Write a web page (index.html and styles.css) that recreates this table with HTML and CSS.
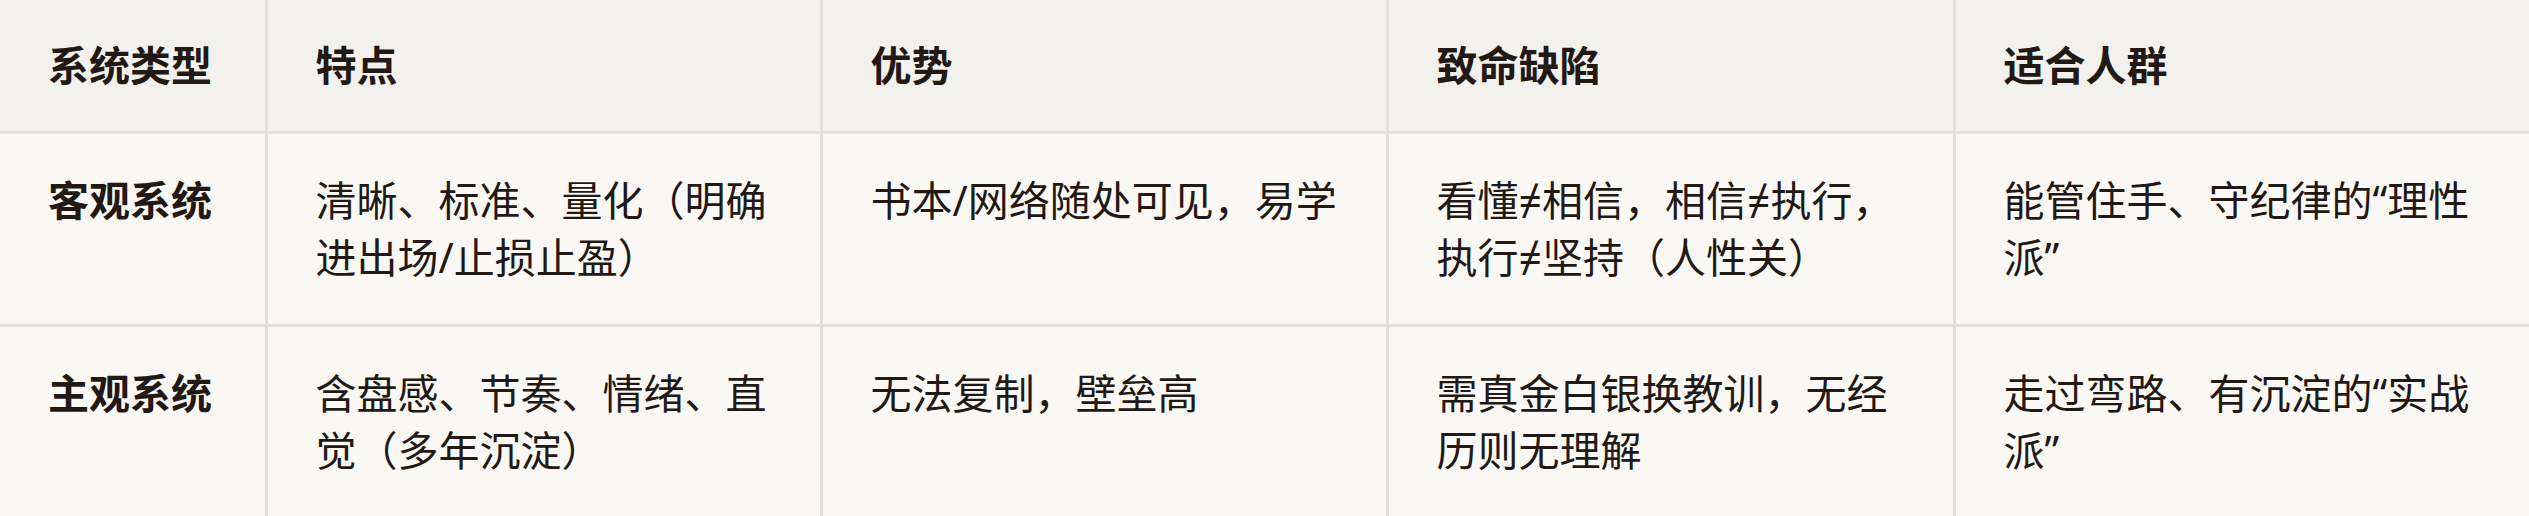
FILE: index.html
```html
<!DOCTYPE html>
<html lang="zh-CN">
<head>
<meta charset="utf-8">
<title>系统类型对比</title>
<link rel="stylesheet" href="styles.css">
</head>
<body>
<table class="compare">
  <colgroup>
    <col class="c1"><col class="c2"><col class="c3"><col class="c4"><col class="c5">
  </colgroup>
  <thead>
    <tr>
      <th>系统类型</th>
      <th>特点</th>
      <th>优势</th>
      <th>致命缺陷</th>
      <th>适合人群</th>
    </tr>
  </thead>
  <tbody>
    <tr>
      <td class="name">客观系统</td>
      <td>清晰、标准、量化（明确进出场/止损止盈）</td>
      <td>书本/网络随处可见，易学</td>
      <td>看懂≠相信，相信≠执行，执行≠坚持（人性关）</td>
      <td>能管住手、守纪律的“理性派”</td>
    </tr>
    <tr>
      <td class="name">主观系统</td>
      <td>含盘感、节奏、情绪、直觉（多年沉淀）</td>
      <td>无法复制，壁垒高</td>
      <td>需真金白银换教训，无经历则无理解</td>
      <td>走过弯路、有沉淀的“实战派”</td>
    </tr>
  </tbody>
</table>
</body>
</html>
```

FILE: styles.css
```css
html, body {
  margin: 0;
  padding: 0;
  background: #f9f8f5;
}

body {
  width: 2529px;
  height: 516px;
  overflow: hidden;
  font-family: "Noto Sans", "Noto Sans CJK SC", sans-serif;
  color: #221814;
}

.compare {
  width: 2529px;
  table-layout: fixed;
  border-collapse: collapse;
  font-size: 41px;
  line-height: 57px;
}

.c1 { width: 266px; }
.c2 { width: 555px; }
.c3 { width: 566px; }
.c4 { width: 567px; }
.c5 { width: 575px; }

.compare th,
.compare td {
  text-align: left;
  vertical-align: top;
  padding: 38px 46px 38px 48px;
  border: 3px solid #e2e0dc;
}

.compare tr > :first-child { border-left: none; }
.compare tr > :last-child { border-right: none; }
.compare thead th { border-top: none; }

.compare thead th {
  background: #f2f1ed;
  font-weight: 700;
  padding-top: 37px;
  padding-bottom: 37px;
}

.compare tbody td {
  background: #f9f8f5;
  font-weight: 400;
}

.compare td.name {
  font-weight: 700;
}
```
